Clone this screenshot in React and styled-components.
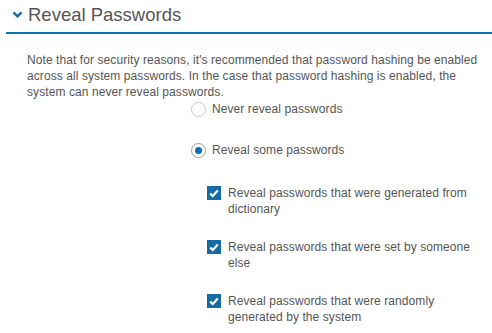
import React, { useState } from "react";
import styled, { createGlobalStyle } from "styled-components";

const GlobalStyle = createGlobalStyle`
  body {
    margin: 0;
    background: #ffffff;
    font-family: "Liberation Sans", Arial, sans-serif;
    color: #555555;
  }
`;

const Section = styled.section`
  width: 492px;
`;

const Header = styled.div`
  display: flex;
  align-items: flex-start;
  gap: 5px;
  height: 34px;
  margin-left: 6px;
  padding: 3px 0 0 6px;
  box-sizing: border-box;
  border-bottom: 2px solid #0b72b5;
`;

const Title = styled.h2`
  margin: 0;
  font-size: 18.5px;
  font-weight: normal;
  line-height: 24px;
  color: #555555;
`;

const ChevronWrap = styled.span`
  display: flex;
  margin-top: 8px;
`;

const Body = styled.div`
  padding: 18px 14px 0 27px;
`;

const Note = styled.p`
  margin: 0;
  font-size: 12px;
  line-height: 16px;
  letter-spacing: 0.08px;
`;

const Options = styled.div`
  display: flex;
  flex-direction: column;
  margin-left: 164px;
`;

const RadioRow = styled.label`
  display: flex;
  align-items: center;
  gap: 6px;
  font-size: 12px;
  line-height: 16px;
  letter-spacing: 0.08px;
  margin-top: ${(p) => p.$top}px;
  cursor: pointer;
`;

const RadioCircle = styled.span`
  width: 15px;
  height: 15px;
  box-sizing: border-box;
  border-radius: 50%;
  border: 1px solid ${(p) => (p.$checked ? "#9a9a9a" : "#c8c8c8")};
  background: #fff;
  display: flex;
  align-items: center;
  justify-content: center;

  &::after {
    content: "";
    width: 7px;
    height: 7px;
    border-radius: 50%;
    background: ${(p) => (p.$checked ? "#0b6fb0" : "transparent")};
  }
`;

const CheckList = styled.div`
  display: flex;
  flex-direction: column;
  margin-left: 16px;
`;

const CheckRow = styled.label`
  display: flex;
  align-items: flex-start;
  gap: 7px;
  font-size: 12px;
  line-height: 16px;
  letter-spacing: 0.08px;
  margin-top: ${(p) => p.$top}px;
  cursor: pointer;
`;

const CheckBox = styled.span`
  flex: none;
  width: 14px;
  height: 14px;
  margin-top: 1px;
  box-sizing: border-box;
  background: ${(p) => (p.$checked ? "#186ca6" : "#fff")};
  border: ${(p) => (p.$checked ? "none" : "1px solid #c4c4c4")};
  display: flex;
  align-items: center;
  justify-content: center;
`;

const CheckText = styled.span`
  width: 255px;
`;

const Chevron = () => (
  <svg width="11" height="7" viewBox="0 0 11 7">
    <polyline
      points="1.5,1.3 5.5,5.3 9.5,1.3"
      fill="none"
      stroke="#1a6fae"
      strokeWidth="2.6"
    />
  </svg>
);

const Tick = () => (
  <svg width="10" height="9" viewBox="0 0 10 9">
    <polyline
      points="1.2,4.6 3.8,7 8.8,1.6"
      fill="none"
      stroke="#ffffff"
      strokeWidth="2.2"
    />
  </svg>
);

const checks = [
  "Reveal passwords that were generated from dictionary",
  "Reveal passwords that were set by someone else",
  "Reveal passwords that were randomly generated by the system",
];

const App = () => {
  const [mode, setMode] = useState("some");
  const [checked, setChecked] = useState([true, true, true]);

  const toggle = (i) => {
    setChecked(checked.map((c, j) => (j === i ? !c : c)));
  };

  return (
    <>
      <GlobalStyle />
      <Section>
        <Header>
          <ChevronWrap>
            <Chevron />
          </ChevronWrap>
          <Title>Reveal Passwords</Title>
        </Header>
        <Body>
          <Note>
            Note that for security reasons, it's recommended that password
            hashing be enabled across all system passwords. In the case that
            password hashing is enabled, the system can never reveal passwords.
          </Note>
          <Options>
            <RadioRow $top={1} onClick={() => setMode("never")}>
              <RadioCircle $checked={mode === "never"} />
              Never reveal passwords
            </RadioRow>
            <RadioRow $top={25} onClick={() => setMode("some")}>
              <RadioCircle $checked={mode === "some"} />
              Reveal some passwords
            </RadioRow>
            <CheckList>
              {checks.map((text, i) => (
                <CheckRow key={i} $top={i === 0 ? 27 : 22} onClick={() => toggle(i)}>
                  <CheckBox $checked={checked[i]}>{checked[i] && <Tick />}</CheckBox>
                  <CheckText>{text}</CheckText>
                </CheckRow>
              ))}
            </CheckList>
          </Options>
        </Body>
      </Section>
    </>
  );
};

export default App;
